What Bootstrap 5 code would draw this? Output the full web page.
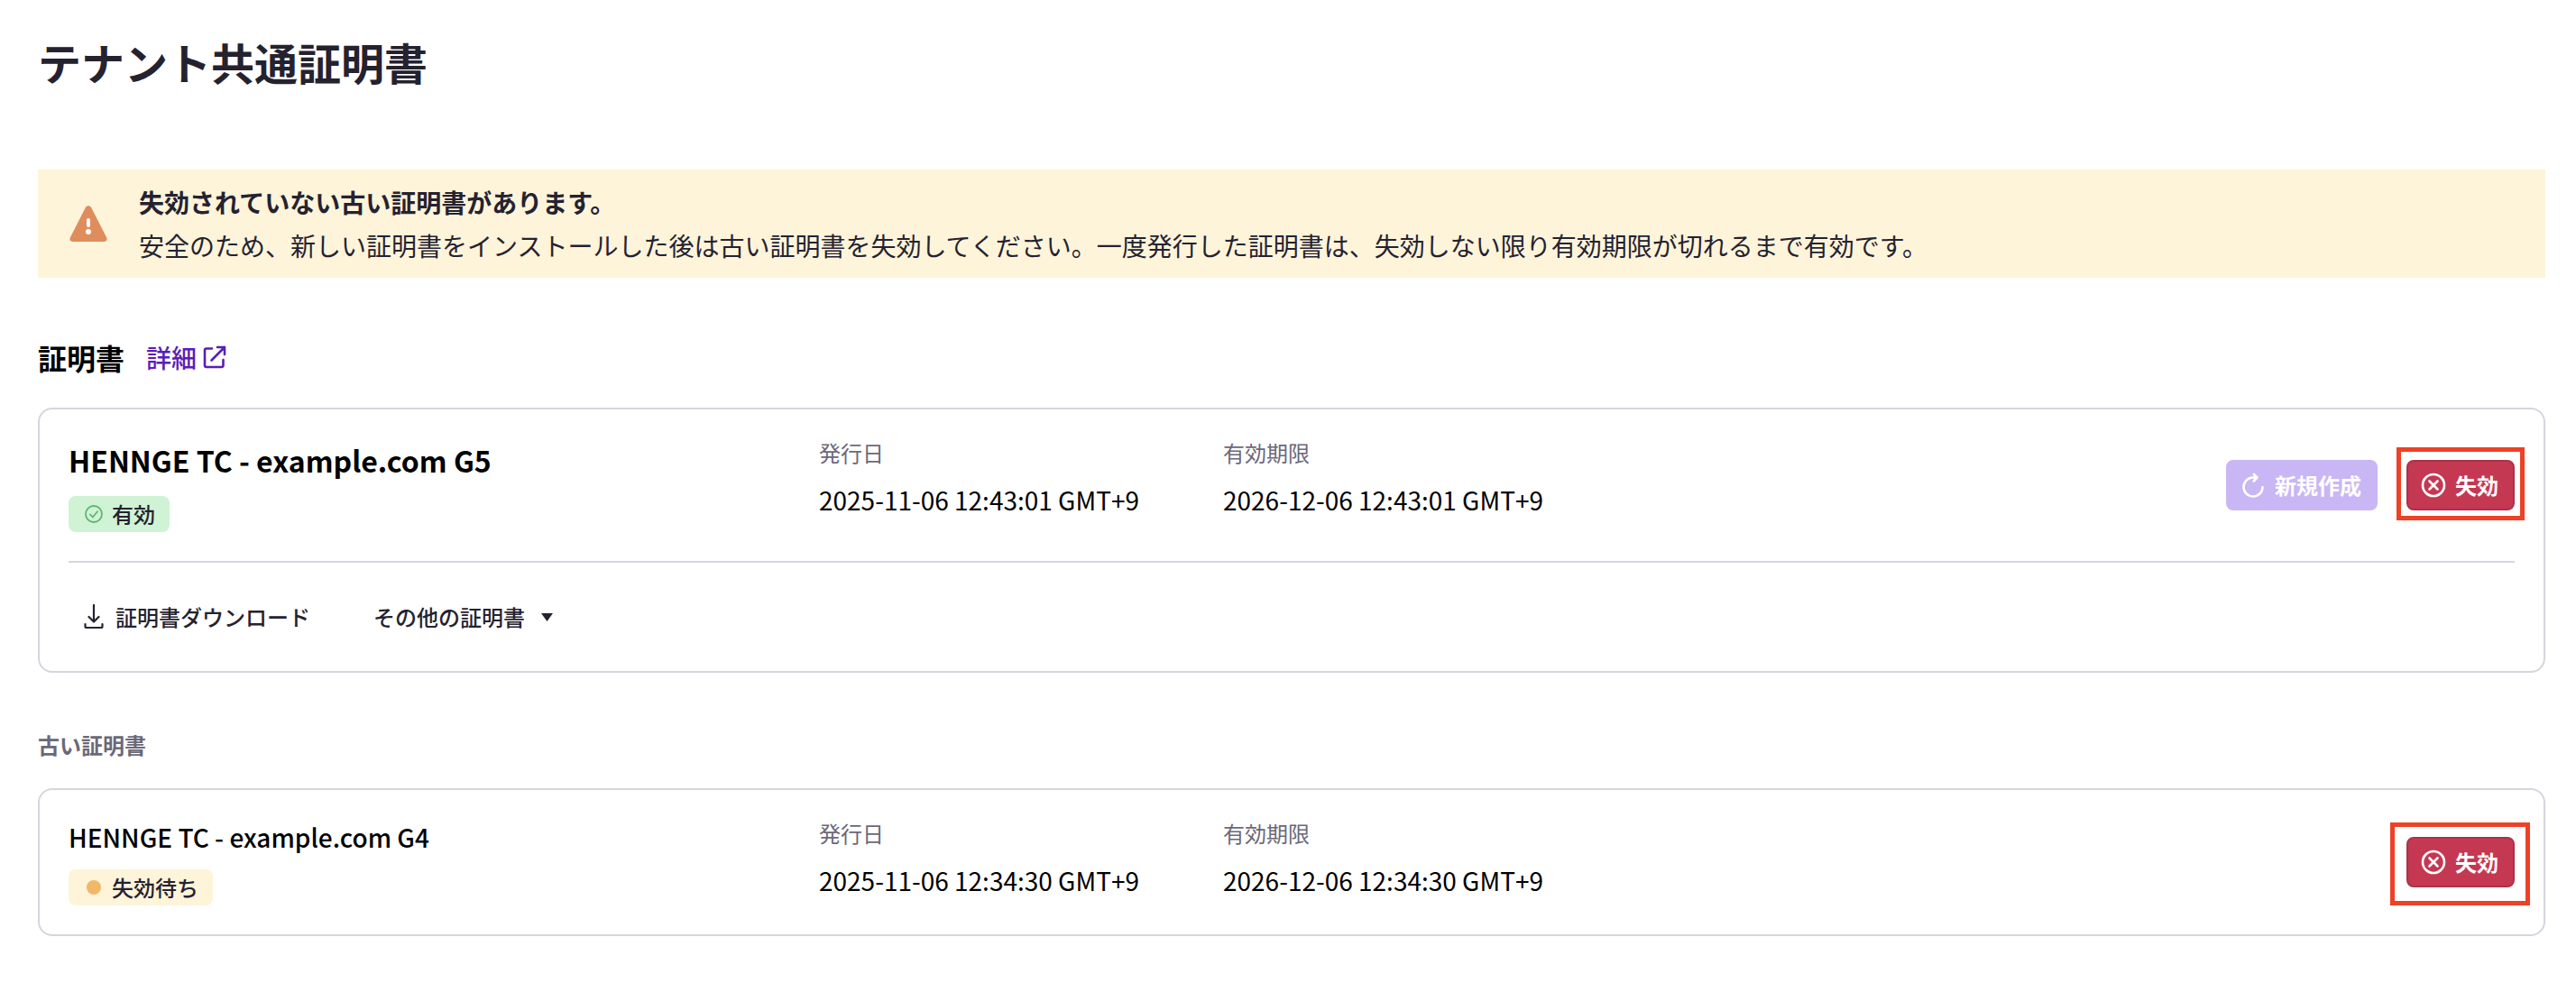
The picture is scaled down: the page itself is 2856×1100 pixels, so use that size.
<!DOCTYPE html>
<html lang="ja">
<head>
<meta charset="utf-8">
<meta name="viewport" content="width=device-width, initial-scale=1">
<title>テナント共通証明書</title>
<link href="https://cdn.jsdelivr.net/npm/bootstrap@5.3.0/dist/css/bootstrap.min.css" rel="stylesheet">
<style>
  body { font-family: "Noto Sans CJK JP", "Noto Sans", sans-serif; font-size: 24px; line-height: 36px; color: #252230; background: #fff; }
  svg { display: block; flex: none; }
  .page { padding: 32px 34px 60px 42px; }
  .page-title { font-size: 48px; line-height: 72px; font-weight: 700; margin-bottom: 84px; }
  .notice { background: #fdf4da; padding: 12px 34px; gap: 34px; font-size: 28px; line-height: 48px; margin-bottom: 62px; color: #252230; }
  .section-head { gap: 24px; margin-bottom: 30px; }
  .section-head h2 { font-size: 32px; line-height: 52px; font-weight: 700; color: #000; }
  .detail-link { font-size: 28px; line-height: 52px; font-weight: 500; color: #581fb8; gap: 6px; }
  .cert { border: 2px solid #d6d5dd; border-radius: 16px; padding: 32px; }
  .cert-divided { padding-bottom: 32px; border-bottom: 2px solid #d6d5dd; }
  .cert-foot { padding-top: 32px; gap: 34px; }
  .cert-name { flex: 0 1 832px; }
  .cert-date { flex: 0 1 448px; margin: 0; }
  .cert-name h3 { font-size: 28px; line-height: 40px; font-weight: 500; color: #000; margin-bottom: 16px; }
  .cert-name h3.current { font-size: 32px; line-height: 48px; font-weight: 700; }
  .cert-date dt { font-weight: 400; line-height: 32px; color: #6b6878; margin-bottom: 14px; }
  .cert-date dd { font-size: 28px; line-height: 44px; color: #000; margin: 0; }
  .status { font-size: 24px; line-height: 40px; font-weight: 500; color: #252230; border-radius: 8px; padding: 0 16px; gap: 8px; }
  .status-valid { background: #cff3d4; }
  .status-wait { background: #fdf4da; }
  .act { --bs-btn-font-size: 24px; --bs-btn-line-height: 36px; --bs-btn-font-weight: 700; --bs-btn-padding-x: 16px; --bs-btn-padding-y: 8px; --bs-btn-border-width: 2px; --bs-btn-border-radius: 8px; display: inline-flex; align-items: center; gap: 10px; white-space: nowrap; }
  .act svg:not(.caret) { margin-left: -2px; }
  .act-new { --bs-btn-color: #fff; --bs-btn-disabled-color: #fff; --bs-btn-disabled-bg: #c9b6f4; --bs-btn-disabled-border-color: #c9b6f4; --bs-btn-disabled-opacity: 1; }
  .act-revoke { --bs-btn-color: #fff; --bs-btn-bg: #c53852; --bs-btn-border-color: #ae3049; --bs-btn-hover-color: #fff; --bs-btn-hover-bg: #ae3049; --bs-btn-hover-border-color: #ae3049; }
  .act-plain { --bs-btn-color: #252230; --bs-btn-font-weight: 500; gap: 8px; }
  .act-menu { gap: 18px; }
  .actions { gap: 32px; }
  .marker { border: 5px solid #ee4126; pointer-events: none; inset: -14px -11px -11px; }
  .marker-wide { inset: -16px -17px -20px -18px; }
  .old-head { font-size: 24px; line-height: 36px; font-weight: 700; color: #6b6878; margin: 62px 0 30px; }
</style>
<script src="https://cdn.jsdelivr.net/npm/bootstrap@5.3.0/dist/js/bootstrap.bundle.min.js"></script>
</head>
<body>
<main class="page">
  <h1 class="page-title">テナント共通証明書</h1>

  <div class="notice d-flex align-items-center" role="alert">
    <svg width="44" height="44" viewBox="0 0 44 44" aria-hidden="true">
      <path d="M18.800 4.200c1.400-2.600 5-2.600 6.400 0l17 33.200c1.200 2.300-.3 4.600-2.800 4.600H4.600c-2.500 0-4-2.300-2.800-4.600z" fill="#df8d5d"/>
      <rect x="20" y="16" width="4" height="10" rx="2" fill="#fff"/>
      <circle cx="22" cy="31" r="3" fill="#fff"/>
    </svg>
    <div>
      <div class="fw-bold">失効されていない古い証明書があります。</div>
      <div>安全のため、新しい証明書をインストールした後は古い証明書を失効してください。一度発行した証明書は、失効しない限り有効期限が切れるまで有効です。</div>
    </div>
  </div>

  <div class="section-head d-flex align-items-center">
    <h2 class="mb-0">証明書</h2>
    <a href="#" class="detail-link d-inline-flex align-items-center text-decoration-none">詳細
      <svg width="28" height="28" viewBox="0 0 28 28" fill="none" stroke="currentColor" stroke-width="2.600" stroke-linecap="round" stroke-linejoin="round" aria-hidden="true">
        <path d="M11 4.500H5A2 2 0 0 0 3 6.500V23a2 2 0 0 0 2 2h16.500a2 2 0 0 0 2-2v-6M17 3h8v8M25 3L10.500 17.500"/>
      </svg>
    </a>
  </div>

  <section class="cert">
    <div class="cert-divided d-flex">
      <div class="cert-name">
        <h3 class="current">HENNGE TC - example.com G5</h3>
        <span class="status status-valid d-inline-flex align-items-center">
          <svg width="24" height="24" viewBox="0 0 24 24" fill="none" stroke="#5fb573" stroke-width="1.800" stroke-linecap="round" stroke-linejoin="round" aria-hidden="true">
            <circle cx="12" cy="12" r="9"/><path d="M8 12.500l2.800 3L16 9.200"/>
          </svg>有効</span>
      </div>
      <dl class="cert-date"><dt>発行日</dt><dd>2025-11-06 12:43:01 GMT+9</dd></dl>
      <dl class="cert-date"><dt>有効期限</dt><dd>2026-12-06 12:43:01 GMT+9</dd></dl>
      <div class="actions d-flex align-items-center ms-auto">
        <button type="button" class="btn act act-new" disabled>
          <svg width="28" height="28" viewBox="0 0 28 28" fill="none" stroke="currentColor" stroke-width="2.600" stroke-linecap="round" stroke-linejoin="round" aria-hidden="true">
            <path d="M24.500 16A10.500 10.500 0 1 1 14 5.500h4M14.800 1.800L18.500 5.500l-3.700 4"/>
          </svg>新規作成</button>
        <div class="position-relative">
          <button type="button" class="btn act act-revoke">
            <svg width="28" height="28" viewBox="0 0 28 28" fill="none" stroke="currentColor" stroke-width="2.600" stroke-linecap="round" aria-hidden="true">
              <circle cx="14" cy="14" r="12"/><path d="M9.500 9.500l9 9M18.500 9.500l-9 9"/>
            </svg>失効</button>
          <span class="marker position-absolute"></span>
        </div>
      </div>
    </div>
    <div class="cert-foot d-flex">
      <button type="button" class="btn act act-plain">
        <svg width="28" height="28" viewBox="0 0 28 28" fill="none" stroke="currentColor" stroke-width="2.200" stroke-linecap="round" stroke-linejoin="round" aria-hidden="true">
          <path d="M12 1v18M6.500 14l5.500 5.500 5.500-5.500M2.500 22v2.500A1.500 1.500 0 0 0 4 26h16a1.500 1.500 0 0 0 1.500-1.500V22"/>
        </svg>証明書ダウンロード</button>
      <button type="button" class="btn act act-plain act-menu" aria-haspopup="true">その他の証明書
        <svg class="caret" width="14" height="12" viewBox="0 0 14 12" fill="currentColor" aria-hidden="true"><path d="M0 2h13L6.500 11z"/></svg>
      </button>
    </div>
  </section>

  <h2 class="old-head">古い証明書</h2>

  <section class="cert">
    <div class="d-flex">
      <div class="cert-name">
        <h3>HENNGE TC - example.com G4</h3>
        <span class="status status-wait d-inline-flex align-items-center">
          <svg width="24" height="24" viewBox="0 0 24 24" aria-hidden="true"><circle cx="12" cy="12" r="8" fill="#f2b867"/></svg>失効待ち</span>
      </div>
      <dl class="cert-date"><dt>発行日</dt><dd>2025-11-06 12:34:30 GMT+9</dd></dl>
      <dl class="cert-date"><dt>有効期限</dt><dd>2026-12-06 12:34:30 GMT+9</dd></dl>
      <div class="actions d-flex align-items-center ms-auto">
        <div class="position-relative">
          <button type="button" class="btn act act-revoke">
            <svg width="28" height="28" viewBox="0 0 28 28" fill="none" stroke="currentColor" stroke-width="2.600" stroke-linecap="round" aria-hidden="true">
              <circle cx="14" cy="14" r="12"/><path d="M9.500 9.500l9 9M18.500 9.500l-9 9"/>
            </svg>失効</button>
          <span class="marker marker-wide position-absolute"></span>
        </div>
      </div>
    </div>
  </section>
</main>
</body>
</html>
